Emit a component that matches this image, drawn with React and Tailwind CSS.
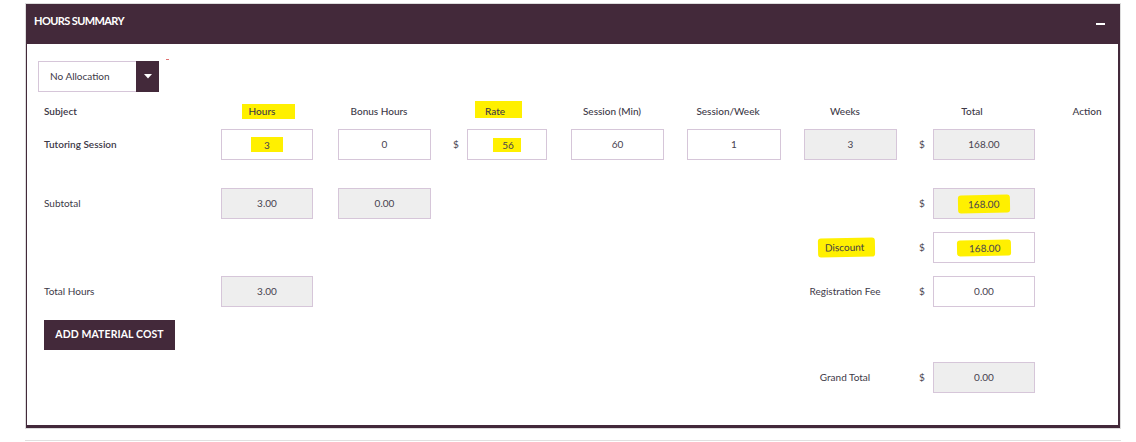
import React from 'react';

const COLS = 'grid grid-cols-[177px_92px_25px_93px_36px_80px_24px_93px_23px_94px_23px_93px_36px_102px_82px] items-center';

function Box({ grey, children }) {
    return (
        <div className={`h-[31px] flex items-center justify-center border border-[#d6c6d9] text-[10px] text-[#47424f] ${grey ? 'bg-[#eeeeee]' : 'bg-white'}`}>
            {children}
        </div>
    );
}

function Dollar() {
    return <div className="pl-[22px] text-[10px] leading-[14px] text-[#47424f] -mt-[1px]">$</div>;
}

function Mark({ className = '', children }) {
    return <span className={`inline-block bg-[#fff000] ${className}`}>{children}</span>;
}

export default function App() {
    return (
        <div className="w-[1136px] h-[442px] bg-white pt-[3px] font-['Lato',_sans-serif] text-[#3d3947]">
            <div className="ml-[25px] w-[1096px] border border-[#dcdcdc]">
                {/* header */}
                <div className="h-[40px] bg-[#43293a] flex justify-between pl-[8px] pr-[15px]">
                    <h2 className="mt-[10px] text-[11px] leading-[13px] font-bold tracking-[-0.6px] text-white">HOURS SUMMARY</h2>
                    <div className="mt-[19px] w-[9px] h-[2px] bg-white" />
                </div>

                <div className="border-l border-r-2 border-b-[3px] border-[#43293a] pl-[11px] pt-[17px] pb-[32px]">
                    {/* allocation select */}
                    <div className="flex items-start">
                        <div className="flex h-[31px] w-[121px]">
                            <div className="flex-1 flex items-center pl-[11px] border border-r-0 border-[#d6c6d9] text-[10px] text-[#3d3947]">
                                No Allocation
                            </div>
                            <div className="w-[23px] bg-[#43293a] flex items-center justify-center">
                                <svg width="8" height="5" viewBox="0 0 8 5">
                                    <polygon points="0,0 8,0 4,4.5" fill="#fff" />
                                </svg>
                            </div>
                        </div>
                        <div className="ml-[7px] -mt-[2px] w-[3px] h-px bg-[#e07070]" />
                    </div>

                    <div className="ml-[6px]">
                        {/* column headings */}
                        <div className={`${COLS} mt-[12px] h-[14px] text-[10px] leading-[14px] font-medium text-[#3d3947]`}>
                            <div className="font-semibold">Subject</div>
                            <div className="text-center pr-[10px]">
                                <Mark className="pl-[7px] pr-[20px] -mr-[13px] pb-[1px] -mb-[1px]">Hours</Mark>
                            </div>
                            <div />
                            <div className="text-center pr-[11px]">Bonus Hours</div>
                            <div />
                            <div className="text-center pr-[24px]">
                                <Mark className="pl-[10px] pr-[17px] -mr-[7px] pt-[3px] -mt-[3px]">Rate</Mark>
                            </div>
                            <div />
                            <div className="text-center pr-[11px]">Session (Min)</div>
                            <div />
                            <div className="text-center pr-[12px]">Session/Week</div>
                            <div />
                            <div className="text-center pr-[11px]">Weeks</div>
                            <div />
                            <div className="text-center pr-[24px]">Total</div>
                            <div className="text-center pl-[22px]">Action</div>
                        </div>

                        {/* tutoring session */}
                        <div className={`${COLS} mt-[11px]`}>
                            <div className="text-[10px] font-semibold">Tutoring Session</div>
                            <Box><Mark className="px-[13px] leading-[11px] pt-[3px] pb-[1px]">3</Mark></Box>
                            <div />
                            <Box>0</Box>
                            <Dollar />
                            <Box><Mark className="pl-[9px] pr-[7px] leading-[11px] pt-[2px] pb-[1px]">56</Mark></Box>
                            <div />
                            <Box>60</Box>
                            <div />
                            <Box>1</Box>
                            <div />
                            <Box grey>3</Box>
                            <Dollar />
                            <Box grey>168.00</Box>
                        </div>

                        {/* subtotal */}
                        <div className={`${COLS} mt-[28px]`}>
                            <div className="text-[10px]">Subtotal</div>
                            <Box grey>3.00</Box>
                            <div />
                            <Box grey>0.00</Box>
                            <div className="col-start-13"><Dollar /></div>
                            <Box grey>
                                <Mark className="pl-[10px] pr-[11px] leading-[11px] pt-[4px] pb-[3px] rounded-[3px] -rotate-1">168.00</Mark>
                            </Box>
                        </div>

                        {/* discount */}
                        <div className={`${COLS} mt-[13px]`}>
                            <div className="col-start-12 text-center pr-[11px] text-[10px]">
                                <Mark className="pl-[7px] pr-[11px] -mr-[4px] pt-[4px] pb-[4px] leading-[11px] rounded-[3px] -rotate-1">Discount</Mark>
                            </div>
                            <Dollar />
                            <Box>
                                <Mark className="pl-[12px] pr-[11px] leading-[11px] pt-[3px] pb-[2px] rounded-[3px] -rotate-1">168.00</Mark>
                            </Box>
                        </div>

                        {/* total hours / registration fee */}
                        <div className={`${COLS} mt-[13px]`}>
                            <div className="text-[10px]">Total Hours</div>
                            <Box grey>3.00</Box>
                            <div className="col-start-12 text-center pr-[11px] text-[10px] whitespace-nowrap">Registration Fee</div>
                            <Dollar />
                            <Box>0.00</Box>
                        </div>

                        <button className="mt-[13px] h-[30px] w-[131px] bg-[#43293a] text-white text-[10.5px] font-bold tracking-[0.1px]">
                            ADD MATERIAL COST
                        </button>

                        {/* grand total */}
                        <div className={`${COLS} mt-[12px]`}>
                            <div className="col-start-12 text-center pr-[11px] text-[10px]">Grand Total</div>
                            <Dollar />
                            <Box grey>0.00</Box>
                        </div>
                    </div>
                </div>
            </div>
            <div className="mt-[11px] ml-[25px] w-[1096px] h-px bg-[#e0e0e0]" />
        </div>
    );
}
